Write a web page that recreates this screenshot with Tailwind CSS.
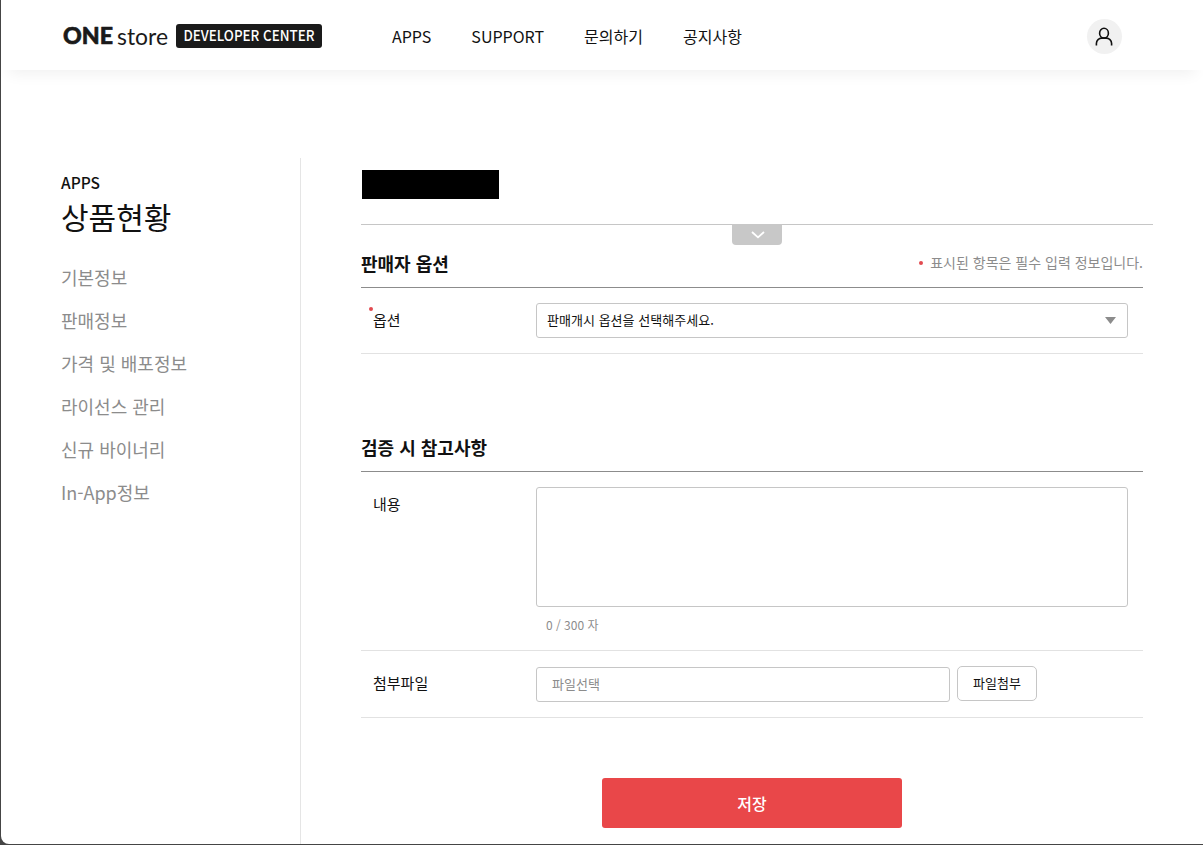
<!DOCTYPE html>
<html lang="ko">
<head>
  <meta charset="UTF-8" />
  <meta name="viewport" content="width=device-width, initial-scale=1.0"/>
  <title>ONE store Developer Center</title>
  <script src="https://cdn.jsdelivr.net/npm/@tailwindcss/browser@4"></script>
</head>
<body class="bg-[#454545] font-['Noto_Sans_CJK_KR',sans-serif] text-[#111]">

  <div class="ml-px h-[844px] overflow-hidden rounded-bl-lg bg-white">

    <header class="flex h-[70px] items-center pl-[61px] shadow-[0_12px_14px_-8px_rgba(0,0,0,0.06)]">
      <svg class="mt-1 h-[40px] w-[262px] overflow-visible" viewBox="0 -5 262 40" role="img">
        <text x="1" y="22.4" font-family="Lato" font-weight="900" font-size="23" textLength="50" lengthAdjust="spacingAndGlyphs" fill="#1a1a1a" stroke="#1a1a1a" stroke-width="0.6" stroke-linejoin="round">ONE</text>
        <text x="55" y="22.5" font-family="Lato" font-size="23" textLength="51" lengthAdjust="spacingAndGlyphs" fill="#1a1a1a">store</text>
        <rect x="114" y="2" width="146" height="24" rx="3" fill="#1a1a1a"/>
        <text x="121.5" y="19.2" font-family="Noto Sans CJK KR" font-weight="500" font-size="15" textLength="131" lengthAdjust="spacingAndGlyphs" fill="#fff">DEVELOPER CENTER</text>
      </svg>
      <nav class="ml-[68px] flex gap-10 pt-0.5 text-base">
        <a href="#">APPS</a>
        <a href="#">SUPPORT</a>
        <a href="#">문의하기</a>
        <a href="#">공지사항</a>
      </nav>
      <button class="mt-0.5 mr-[81px] ml-auto flex size-[35px] items-center justify-center rounded-full bg-[#f1f1f1]">
        <svg class="mt-0.5 mr-px size-[20px]" viewBox="0 0 20 20" fill="none" stroke="#111" stroke-width="1.6">
          <ellipse cx="10" cy="6.2" rx="4.4" ry="4.9"/>
          <path d="M2.4 18.6v-2.2c0-3.2 2.6-5.3 5.3-5.3h4.6c2.7 0 5.3 2.1 5.3 5.3v2.2"/>
        </svg>
      </button>
    </header>

    <div class="flex pt-[88px]">
      <aside class="h-[700px] w-[300px] shrink-0 border-r border-[#e5e5e5] pt-3 pl-[60px]">
        <p class="text-[15.5px] leading-[25px] font-medium">APPS</p>
        <h1 class="text-[30px] leading-[43px]">상품현황</h1>
        <ul class="mt-[18px] text-lg leading-[43px] text-[#8c8c8c]">
          <li>기본정보</li>
          <li>판매정보</li>
          <li>가격 및 배포정보</li>
          <li>라이선스 관리</li>
          <li>신규 바이너리</li>
          <li>In-App정보</li>
        </ul>
      </aside>

      <main class="ml-[60px] w-[792px]">
        <div class="relative h-[67px] border-b border-[#c6c6c6] pt-3 pl-px">
          <div class="h-[29px] w-[137px] bg-black"></div>
          <button class="absolute top-[66px] left-[371px] flex h-[21px] w-[50px] items-center justify-center rounded-b bg-[#c8c8c8]">
            <svg class="ml-px h-2 w-3.5" viewBox="0 0 14 8" fill="none" stroke="#fff" stroke-width="1.8"><path d="M1 1l6 5.4L13 1"/></svg>
          </button>
        </div>

        <div class="w-[782px]">
          <section>
            <div class="flex h-[63px] items-center justify-between border-b border-[#8c8c8c] pt-3.5">
              <h2 class="text-lg font-bold">판매자 옵션</h2>
              <p class="mb-0.5 flex items-center gap-[7px] text-sm text-[#8c8c8c]"><i class="mt-0.5 size-1 rounded-full bg-[#e24a50]"></i>표시된 항목은 필수 입력 정보입니다.</p>
            </div>
            <div class="flex h-[66px] items-center border-b border-[#e2e2e2]">
              <label class="relative w-[175px] pl-3 text-[15px]">
                <i class="absolute -top-[2px] left-2 size-1 rounded-full bg-[#e24a50]"></i>옵션
              </label>
              <div class="flex h-[35px] w-[592px] items-center justify-between rounded-[3px] border border-[#c6c6c6] pr-[11px] pb-px pl-2.5 text-[13px] tracking-[0.03px]">
                판매개시 옵션을 선택해주세요.
                <svg class="mt-px h-[7px] w-[11px]" viewBox="0 0 11 7"><path d="M0 0h11L5.5 7z" fill="#8c8c8c"/></svg>
              </div>
            </div>
          </section>

          <section class="mt-[75px]">
            <div class="flex h-[43px] items-center border-b border-[#8c8c8c] pb-1.5">
              <h2 class="text-lg font-bold">검증 시 참고사항</h2>
            </div>
            <div class="flex h-[179px] border-b border-[#e2e2e2] pt-[15px]">
              <label class="w-[175px] pt-1.5 pl-3 text-[15px]">내용</label>
              <div>
                <textarea class="block h-[120px] w-[592px] resize-none rounded-[3px] border border-[#c6c6c6]"></textarea>
                <p class="mt-2 pl-2.5 text-xs leading-5 text-[#8c8c8c]">0 / 300 자</p>
              </div>
            </div>
            <div class="flex h-[67px] items-center border-b border-[#e2e2e2]">
              <label class="mb-0.5 w-[175px] pl-3 text-[15px]">첨부파일</label>
              <div class="flex h-[35px] w-[414px] items-center rounded-[3px] border border-[#c6c6c6] pl-[15px] text-[13px] text-[#8c8c8c]">파일선택</div>
              <button class="mb-0.5 ml-[7px] h-[35px] w-20 rounded-[5px] border border-[#c6c6c6] text-[13px]">파일첨부</button>
            </div>
          </section>

          <button class="mx-auto mt-[60px] block h-[50px] w-[300px] rounded-[3px] bg-[#e94749] text-base font-medium text-white">저장</button>
        </div>
      </main>
    </div>
  </div>

</body>
</html>
